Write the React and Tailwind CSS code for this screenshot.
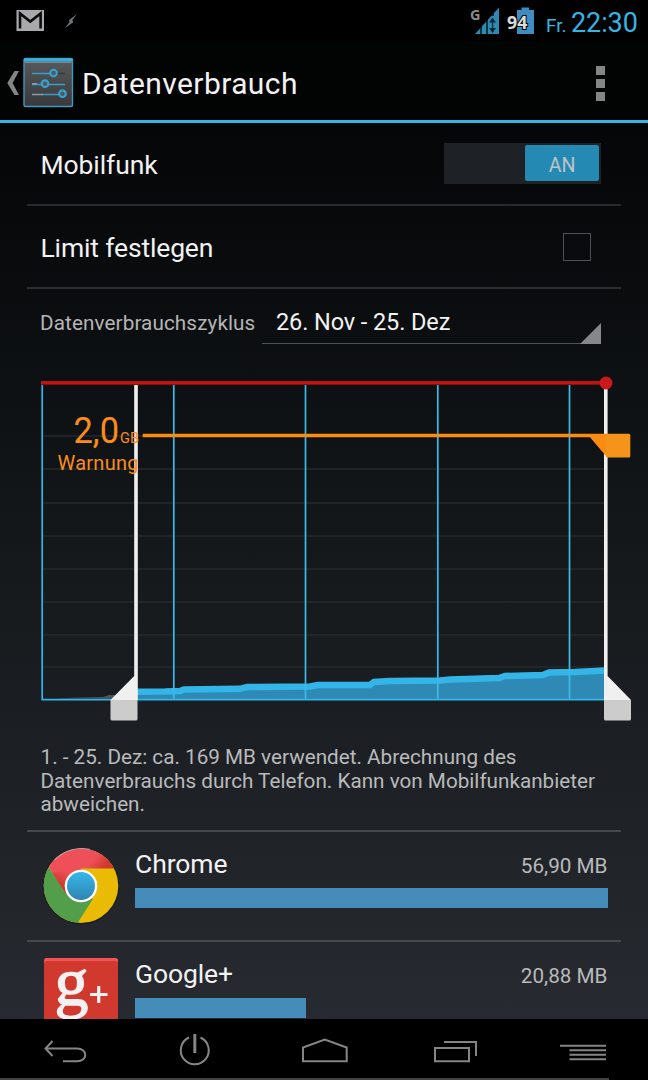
import React, { useState } from "react"

const gridLines = [436, 469, 503, 536, 569, 602, 635, 667]
const weekLines = [173.8, 305.5, 437.8, 569.5]

const apps = [
  { name: "Chrome", size: "56,90 MB", percent: 100, icon: ChromeIcon },
  { name: "Google+", size: "20,88 MB", percent: 36.1, icon: PlusIcon },
]

function ChromeIcon() {
  return (
    <svg width="78" height="78" viewBox="0 -0.700 78 78">
      <defs>
        <clipPath id="disc">
          <circle cx="39" cy="39" r="37.3" />
        </clipPath>
        <linearGradient id="core" x1="0" y1="0" x2="0" y2="1">
          <stop offset="0" stopColor="#35b8ea" />
          <stop offset="1" stopColor="#3183b0" />
        </linearGradient>
        <linearGradient id="chromeRed" gradientUnits="userSpaceOnUse" x1="46" y1="6" x2="62" y2="20">
          <stop offset="0.4" stopColor="#ee4f58" />
          <stop offset="1" stopColor="#d03a30" />
        </linearGradient>
        <linearGradient id="fold" gradientUnits="userSpaceOnUse" x1="26" y1="26" x2="20" y2="38">
          <stop offset="0" stopColor="#d03a30" stopOpacity="0" />
          <stop offset="1" stopColor="#cf3a30" />
        </linearGradient>
      </defs>
      <circle cx="39" cy="39.5" r="38" fill="#15181b" />
      <g clipPath="url(#disc)">
        <rect width="78" height="78" fill="#e9bb05" />
        <path d="M6.500 20 L24 47 L51 52 L34.500 78 H0 V0 Z" fill="#529e4b" />
        <path d="M6.500 20 L24 47 L39 39 L39 21.8 H78 V0 H0 Z" fill="url(#chromeRed)" />
        <path d="M10 26 L24 47 L39 39 V22 Z" fill="url(#fold)" />
      </g>
      <path d="M13 13 A37 37 0 0 1 48 2.8" fill="none" stroke="#b9a3a5" strokeWidth="1.2" />
      <circle cx="39" cy="39.3" r="16.3" fill="#fff" />
      <circle cx="39" cy="39.3" r="14" fill="url(#core)" />
    </svg>
  )
}

function PlusIcon() {
  return (
    <svg width="78" height="78" viewBox="0 0 78 78">
      <rect x="2" y="2" width="74" height="76" rx="3" fill="#d2392e" />
      <path d="M2 7 V5 a3 3 0 0 1 3 -3 H73 a3 3 0 0 1 3 3 V7 a3 3 0 0 0 -3 -2 H5 a3 3 0 0 0 -3 2z" fill="#f4525a" />
      <text
        x="12.500"
        y="49"
        fill="#f3f1f1"
        stroke="#f3f1f1"
        strokeWidth="1.300"
        fontFamily="Liberation Serif, serif"
        fontSize="68"
      >
        g
      </text>
      <path d="M48 38.500 H65.500 M56.700 30 V47" stroke="#f3f1f1" strokeWidth="3.200" />
    </svg>
  )
}

function StatusBar() {
  return (
    <div className="flex h-[42px] items-center bg-black">
      <svg width="90" height="42" viewBox="0 0 90 42">
        <rect x="16.500" y="10" width="27.500" height="21" fill="#a9a8ab" />
        <path d="M20 28.500 V13.500 L30.300 21.500 L40.600 13.500 V28.500" fill="none" stroke="#0b0b0d" strokeWidth="2.600" />
        <path d="M77 14 L69 20 L69.500 22 L65 28 L73 22.500 L72.500 20 Z" fill="#6a7378" />
      </svg>
      <svg className="ml-auto" width="78" height="42" viewBox="-2 0 78 42" fontFamily="Noto Sans, sans-serif" fontWeight="700">
        <text x="0" y="19.500" fill="#8b8b8b" fontSize="14.500">
          G
        </text>
        <path d="M5 34 L29 7.500 V34 Z" fill="#2b8bb5" />
        <path d="M11 20 V35 M17 15 V35 M23 10 V16" stroke="#000" strokeWidth="1.300" />
        <path d="M19 22.500 L22.500 17.500 L26 22.500 Z M19 28 L22.500 33 L26 28 Z M22 22 H23.200 V28 H22 Z" fill="#0c2735" />
        <path d="M47 10 H51.500 V7.500 H59 V10 H64 V34 H47 Z" fill="#3b8ebf" />
        <text x="37" y="29" fill="#dcdcdc" stroke="#000" strokeWidth="2" paintOrder="stroke" fontSize="17.800">
          94
        </text>
      </svg>
      <div className="flex w-[102px] items-baseline pt-[5px] text-[#35b5e5]">
        <span className="w-[25px] text-[19px]">Fr.</span>
        <span className="text-[27px] tracking-[-0.1px]">22:30</span>
      </div>
    </div>
  )
}

function ActionBar() {
  return (
    <div className="flex h-[81px] items-center border-b-[3px] border-[#33b5e5] bg-[#020303]">
      <svg width="76" height="78" viewBox="0 42 76 78">
        <defs>
          <linearGradient id="tile" x1="0" y1="0" x2="0" y2="1">
            <stop offset="0" stopColor="#585a5d" />
            <stop offset="1" stopColor="#37393c" />
          </linearGradient>
        </defs>
        <path d="M19 71 H14.500 L7.300 83 L14.500 95 H19 L12.600 83 Z" fill="#858585" />
        <rect x="24" y="58.500" width="48.500" height="48" rx="1.500" fill="url(#tile)" stroke="#4297bd" strokeWidth="1.400" />
        <path d="M24 58.500 H72.500 V61.500 H24 Z" fill="#33b0e4" />
        <path d="M25 62.300 H71.500" stroke="#8b9599" strokeWidth="1" />
        <path d="M32 73.500 H50 M32 84.500 H42 M48 84.500 H65 M42 94.500 H60" stroke="#359fca" strokeWidth="1.400" />
        <path d="M57 73.500 H65" stroke="#34393c" strokeWidth="1.400" />
        <path d="M32 94.500 H43 M32 83.800 H37" stroke="#8a9ba3" strokeWidth="1.400" />
        <g fill="#54585a" stroke="#36a3d1" strokeWidth="2.100">
          <circle cx="53.500" cy="73" r="3.300" />
          <circle cx="45" cy="83.700" r="3.300" />
          <circle cx="62.500" cy="93.700" r="3.300" />
        </g>
      </svg>
      <h1 className="ml-[6px] pt-[5px] text-[30px] tracking-[0.4px] text-[#f2f2f2]">Datenverbrauch</h1>
      <div className="mr-[43px] ml-auto flex flex-col gap-[4px] pt-[4px]">
        <span className="size-[9px] bg-[#858585]" />
        <span className="size-[9px] bg-[#858585]" />
        <span className="size-[9px] bg-[#858585]" />
      </div>
    </div>
  )
}

function UsageChart() {
  return (
    <svg width="648" height="376" viewBox="0 360 648 376" fontFamily="Roboto, sans-serif">
      {gridLines.map((y) => (
        <path key={y} d={`M43 ${y} H604`} stroke="#262a2d" strokeWidth="1.700" />
      ))}

      {/* usage outside the selected range */}
      <path d="M55 698.500 L72 697.800 L103 697 L109 695 H116 V698.500 Z" fill="#4c575d" />

      {/* usage inside the selected range */}
      <path
        d="M137 691.700 L165 691.500 L180 691 L184 689.500 L240 688.800 L247 687 L310 686.500 L318 685 L370 685 L374 682 L390 681 L440 680.500 L450 679.500 L499 678 L505 676 L543 675 L549 672.500 L575 672 L596 671 L604 670.500 V700 H137 Z"
        fill="#2e8ab5"
      />
      <path
        d="M137 691.700 L165 691.500 L180 691 L184 689.500 L240 688.800 L247 687 L310 686.500 L318 685 L370 685 L374 682 L390 681 L440 680.500 L450 679.500 L499 678 L505 676 L543 675 L549 672.500 L575 672 L596 671 L604 670.500"
        fill="none"
        stroke="#33b5e8"
        strokeWidth="6.500"
      />

      {weekLines.map((x) => (
        <path key={x} d={`M${x} 385 V700`} stroke="#3db8ea" strokeWidth="1.700" />
      ))}
      <path d="M42.200 385 V699.700 H604" fill="none" stroke="#33b5e8" strokeWidth="1.700" />

      {/* range sweeps */}
      <path d="M134.200 385 H137.800 V700 H110.500 L134.200 676 Z" fill="#f0f0f0" />
      <path d="M110.500 700 H137.500 V719 a1.500 1.500 0 0 1 -1.500 1.500 H112 a1.500 1.500 0 0 1 -1.500 -1.500 Z" fill="#cccccc" />
      <path d="M604 385 H607.600 V676 L631 700 H604 Z" fill="#f0f0f0" />
      <path d="M604 700 H631 V719 a1.500 1.500 0 0 1 -1.500 1.500 H605.500 a1.500 1.500 0 0 1 -1.500 -1.500 Z" fill="#cccccc" />

      {/* limit */}
      <rect x="41" y="381" width="565" height="4" fill="#c3120f" />
      <rect x="41" y="384" width="560" height="1" fill="#8a0c0a" />
      <circle cx="606" cy="383" r="6.500" fill="#c81a1a" />

      {/* warning */}
      <path d="M142.700 433.800 H607 V457.300 L590 437.200 H142.700 Z" fill="#fb8c13" />
      <rect x="606" y="433.800" width="24.300" height="23.700" rx="1.500" fill="#f4941a" />
      <g fill="#fb8c1a">
        <text x="73.500" y="443.300" fontSize="36" textLength="45.500" lengthAdjust="spacingAndGlyphs">
          2,0
        </text>
        <text x="120" y="443.300" fontSize="15" textLength="19" lengthAdjust="spacingAndGlyphs">
          GB
        </text>
        <text x="57.500" y="470" fontSize="20" textLength="81" lengthAdjust="spacing">
          Warnung
        </text>
      </g>
    </svg>
  )
}

function NavBar() {
  return (
    <div className="flex h-[61px] shrink-0 flex-col bg-black">
      <svg width="648" height="59" viewBox="0 1019 648 59" fill="none" stroke="#858585" strokeWidth="2">
        <path d="M52.500 1041 L45.500 1048.500 L52.500 1056 M46 1048.500 H77 C88 1048.500 88 1061.300 77 1061.300 H63" />
        <path d="M189 1037.500 A14 14 0 1 0 200.500 1037.500" />
        <path d="M194.800 1034 V1053" strokeWidth="3" />
        <path d="M303 1061.300 V1047.500 L324.800 1039.500 L346.700 1047.500 V1061.300 Z" />
        <path d="M435 1048 H469 V1061.300 H435 Z M444 1042 H476 V1056" />
        <path d="M560 1045.700 H606 M569.500 1050.300 H606 M569.500 1054.800 H606 M569.500 1059.300 H606" />
      </svg>
      <div className="h-[2px] w-[609px] bg-[#444444]" />
    </div>
  )
}

export default function App() {
  const [mobile, setMobile] = useState(true)
  const [limit, setLimit] = useState(false)

  return (
    <div className="flex h-[1080px] w-[648px] flex-col overflow-hidden bg-black font-['Roboto',sans-serif] leading-none">
      <StatusBar />
      <ActionBar />

      <main className="flex min-h-0 flex-1 flex-col overflow-hidden bg-linear-to-b from-[#050607] via-[#15191c] to-[#272a30]">
        <div className="mx-[27px] flex h-[83px] shrink-0 items-center justify-between border-b-2 border-[#26292c] pr-[20px] pl-[13.500px]">
          <span className="pt-[3px] text-[26.500px] tracking-[-0.1px] text-[#f2f2f2]">Mobilfunk</span>
          <button
            onClick={() => setMobile(!mobile)}
            className="flex h-[41px] w-[157px] justify-end bg-[#1e2126] p-[2px]"
          >
            <span className="flex h-[36px] w-[74px] items-center justify-center rounded-[2px] bg-[#248ab4] pt-[6px] text-[19.500px] text-[#bfc3c6]">
              {mobile ? "AN" : "AUS"}
            </span>
          </button>
        </div>

        <div className="mx-[27px] flex h-[83px] shrink-0 items-center justify-between border-b-2 border-[#2b2e30] pr-[30px] pl-[13.500px]">
          <span className="pt-[3px] text-[26.500px] tracking-[-0.15px] text-[#f2f2f2]">Limit festlegen</span>
          <button onClick={() => setLimit(!limit)} className="size-[28px] border-[1.500px] border-[#4a5054]">
            {limit ? "✓" : ""}
          </button>
        </div>

        <div className="mr-[47px] ml-[40px] flex h-[71px] shrink-0">
          <span className="w-[222px] pt-[24px] text-[20.700px] tracking-[0.1px] text-[#b5b5b5]">
            Datenverbrauchszyklus
          </span>
          <div className="relative h-[55px] flex-1 border-b-[1.500px] border-[#505355] pt-[22px] pl-[14px]">
            <span className="text-[23.500px] tracking-[-0.1px] text-[#f2f2f2]">26. Nov - 25. Dez</span>
            <svg className="absolute right-0 -bottom-px" width="21" height="21">
              <path d="M21 0 V21 H0 Z" fill="#858789" />
            </svg>
          </div>
        </div>

        <div className="shrink-0">
          <UsageChart />
        </div>

        <p className="h-[94px] shrink-0 pt-[10px] pl-[40.500px] text-[20.700px] leading-[23.600px] text-[#b9babb]">
          1. - 25. Dez: ca. 169 MB verwendet. Abrechnung des
          <br />
          Datenverbrauchs durch Telefon. Kann von Mobilfunkanbieter
          <br />
          abweichen.
        </p>

        {apps.map((app) => (
          <div key={app.name} className="mx-[27px] flex h-[110px] shrink-0 border-t-2 border-[#45484b] pt-[14px] pr-[13.500px] pl-[15px]">
            <app.icon />
            <div className="ml-[15px] flex-1">
              <div className="flex h-[42px] items-baseline justify-between pt-[5px]">
                <span className="text-[26.500px] tracking-[-0.1px] text-[#f2f2f2]">{app.name}</span>
                <span className="text-[20.700px] text-[#b9babb]">{app.size}</span>
              </div>
              <div className="h-[20px] bg-[#458cb9]" style={{ width: `${app.percent}%` }} />
            </div>
          </div>
        ))}
      </main>

      <NavBar />
    </div>
  )
}
